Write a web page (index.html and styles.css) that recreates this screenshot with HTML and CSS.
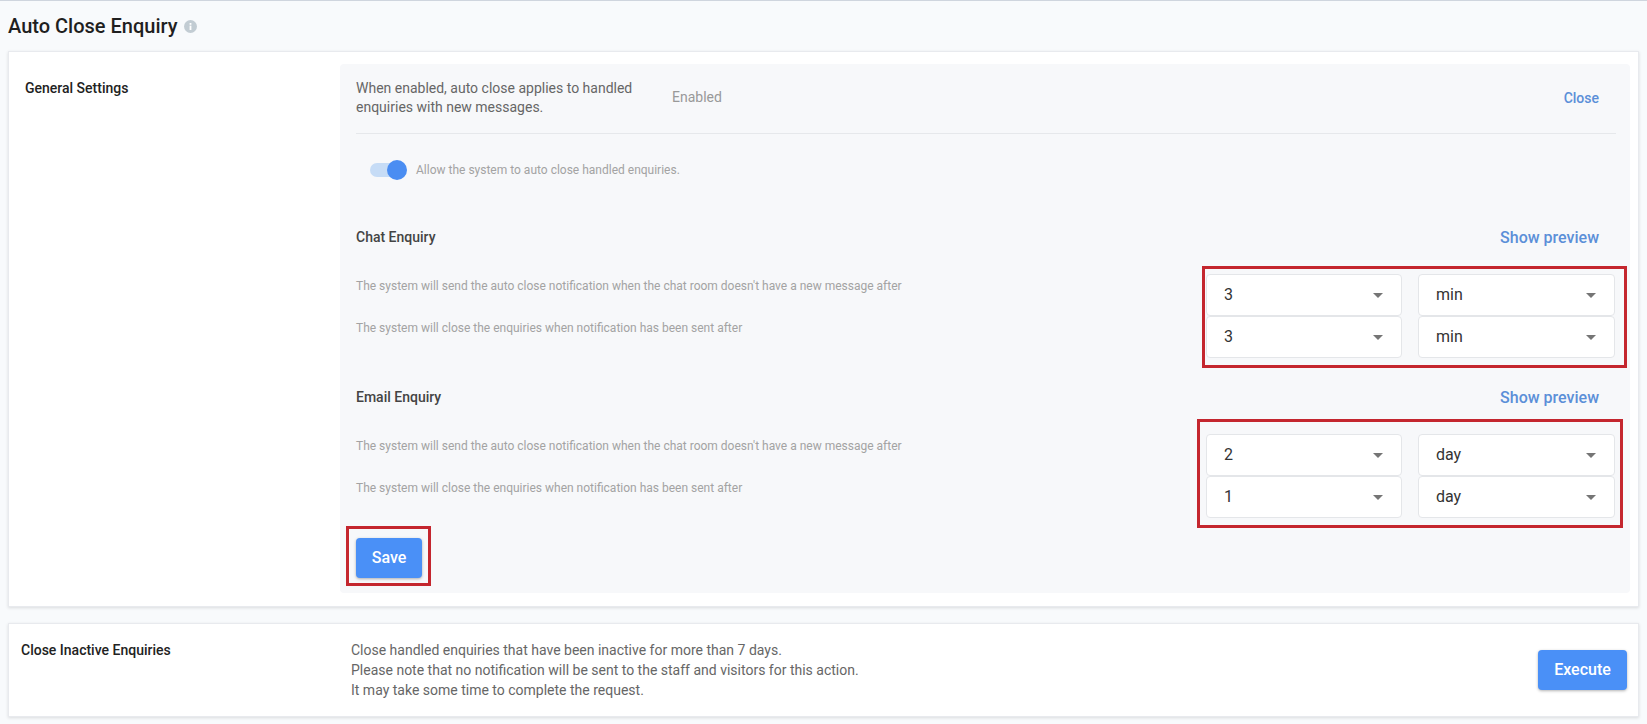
FILE: index.html
```html
<!DOCTYPE html>
<html lang="en">
<head>
    <meta charset="UTF-8" />
    <title>Auto Close Enquiry</title>
    <link rel="stylesheet" href="styles.css">
</head>
<body>
    <div class="page-header">
        <h1>Auto Close Enquiry</h1>
        <svg class="info-icon" width="13" height="13" viewBox="0 0 13 13">
            <circle cx="6.5" cy="6.5" r="6.5" fill="#c2ccd3" />
            <rect x="5.6" y="5.6" width="1.8" height="4.4" fill="#fff" />
            <rect x="5.6" y="3" width="1.8" height="1.8" fill="#fff" />
        </svg>
    </div>

    <div class="card general-card">
        <div class="card-label">General Settings</div>
        <div class="panel">
            <div class="panel-top">
                <p class="panel-note">When enabled, auto close applies to handled enquiries with new messages.</p>
                <span class="status">Enabled</span>
                <a class="link close-link">Close</a>
            </div>

            <div class="toggle-row">
                <span class="toggle"><span class="toggle-knob"></span></span>
                <span class="toggle-text">Allow the system to auto close handled enquiries.</span>
            </div>

            <div class="section-head">
                <span class="section-title">Chat Enquiry</span>
                <a class="link preview-link">Show preview</a>
            </div>
            <div class="setting-row first-row">
                <span class="setting-text">The system will send the auto close notification when the chat room doesn't have a new message after</span>
                <div class="select">3</div>
                <div class="select unit">min</div>
            </div>
            <div class="setting-row">
                <span class="setting-text">The system will close the enquiries when notification has been sent after</span>
                <div class="select">3</div>
                <div class="select unit">min</div>
            </div>

            <div class="section-head email-head">
                <span class="section-title">Email Enquiry</span>
                <a class="link preview-link">Show preview</a>
            </div>
            <div class="setting-row first-row">
                <span class="setting-text">The system will send the auto close notification when the chat room doesn't have a new message after</span>
                <div class="select">2</div>
                <div class="select unit">day</div>
            </div>
            <div class="setting-row">
                <span class="setting-text">The system will close the enquiries when notification has been sent after</span>
                <div class="select">1</div>
                <div class="select unit">day</div>
            </div>

            <button class="btn save-btn">Save</button>

            <!-- red annotation boxes -->
            <div class="mark mark-chat"></div>
            <div class="mark mark-email"></div>
            <div class="mark mark-save"></div>
        </div>
    </div>

    <div class="card inactive-card">
        <div class="inactive-label">Close Inactive Enquiries</div>
        <div class="inactive-text">
            Close handled enquiries that have been inactive for more than 7 days.<br>
            Please note that no notification will be sent to the staff and visitors for this action.<br>
            It may take some time to complete the request.
        </div>
        <button class="btn execute-btn">Execute</button>
    </div>
</body>
</html>
```

FILE: styles.css
```css
* {
    box-sizing: border-box;
}

html, body {
    height: 100%;
}

body {
    margin: 0;
    overflow: hidden;
    font-family: Roboto, Arial, sans-serif;
    background: #f8fafc;
    border-top: 1px solid #cfd5de;
    color: #333;
}

.page-header {
    display: flex;
    align-items: center;
    height: 50px;
    padding-left: 8px;
}

.page-header h1 {
    margin: 0;
    font-size: 20px;
    font-weight: 500;
    color: #1f1f1f;
}

.info-icon {
    margin: 1px 0 0 6px;
}

.card {
    display: flex;
    width: 1631px;
    margin-left: 8px;
    background: #fff;
    border: 1px solid #e8eaee;
    box-shadow: 0 1px 3px rgba(0,0,0,0.12);
}

.general-card {
    height: 556px;
    padding: 12px 0;
}

.card-label {
    width: 331px;
    padding: 14px 0 0 16px;
    font-size: 14px;
    line-height: 20px;
    font-weight: 500;
    color: #222;
}

.panel {
    position: relative;
    width: 1290px;
    height: 529px;
    padding: 0 14px 0 16px;
    background: #f7f8fa;
    border-radius: 4px;
}

.panel-top {
    display: flex;
    align-items: center;
    height: 70px;
    padding-bottom: 2px;
    border-bottom: 1px solid #e6e8eb;
}

.panel-note {
    width: 316px;
    margin: 0;
    font-size: 14px;
    line-height: 19px;
    color: #666;
}

.status {
    margin-bottom: 2px;
    font-size: 14px;
    color: #999;
}

.link {
    color: #5b8fd8;
    font-weight: 500;
    cursor: pointer;
}

.close-link {
    margin-left: auto;
    margin-right: 17px;
    font-size: 14px;
}

.toggle-row {
    display: flex;
    align-items: center;
    height: 20px;
    margin-top: 26px;
    padding-left: 14px;
}

.toggle {
    position: relative;
    width: 34px;
    height: 14px;
    background: #c6dcf6;
    border-radius: 7px;
}

.toggle-knob {
    position: absolute;
    top: -3px;
    right: -3px;
    width: 20px;
    height: 20px;
    background: #4a8df2;
    border-radius: 50%;
}

.toggle-text {
    margin-left: 12px;
    font-size: 12px;
    color: #a3a3a3;
}

.section-head {
    display: flex;
    justify-content: space-between;
    align-items: center;
    height: 20px;
    margin-top: 47px;
    padding-right: 17px;
}

.email-head {
    margin-top: 29px;
}

.section-title {
    font-size: 14px;
    font-weight: 500;
    color: #444;
}

.preview-link {
    font-size: 16px;
}

.setting-row {
    display: flex;
    align-items: flex-start;
    gap: 16px;
    height: 42px;
    margin-right: 1px;
}

.first-row {
    margin-top: 27px;
}

.setting-text {
    flex: 1;
    padding-top: 4px;
    font-size: 12px;
    line-height: 16px;
    color: #a3a3a3;
}

.select {
    position: relative;
    width: 196px;
    height: 42px;
    padding-left: 17px;
    font-size: 16px;
    line-height: 40px;
    color: #333;
    background: #fff;
    border: 1px solid #e4e6e9;
    border-radius: 4px;
}

.select.unit {
    width: 197px;
}

.select::after {
    content: "";
    position: absolute;
    top: 18px;
    right: 18px;
    border-top: 5px solid #757575;
    border-left: 5px solid transparent;
    border-right: 5px solid transparent;
}

.btn {
    height: 40px;
    padding: 0 0 2px;
    font-family: inherit;
    font-size: 16px;
    font-weight: 500;
    color: #fff;
    background: #4a90f7;
    border: none;
    border-radius: 4px;
    box-shadow: 0 1px 3px rgba(0,0,0,0.3);
    cursor: pointer;
}

.save-btn {
    display: block;
    width: 66px;
    margin-top: 20px;
}

.mark {
    position: absolute;
    border: 3px solid #c4262e;
}

.mark-chat {
    top: 202px;
    left: 862px;
    width: 425px;
    height: 102px;
}

.mark-email {
    top: 355px;
    left: 857px;
    width: 426px;
    height: 109px;
}

.mark-save {
    top: 462px;
    left: 6px;
    width: 85px;
    height: 60px;
}

.inactive-card {
    align-items: flex-start;
    height: 94px;
    margin-top: 16px;
    padding: 16px 11px 0 12px;
}

.inactive-label {
    width: 330px;
    font-size: 14px;
    line-height: 20px;
    font-weight: 500;
    color: #222;
}

.inactive-text {
    flex: 1;
    font-size: 14px;
    line-height: 20px;
    color: #666;
}

.execute-btn {
    width: 89px;
    margin-top: 10px;
}
```
